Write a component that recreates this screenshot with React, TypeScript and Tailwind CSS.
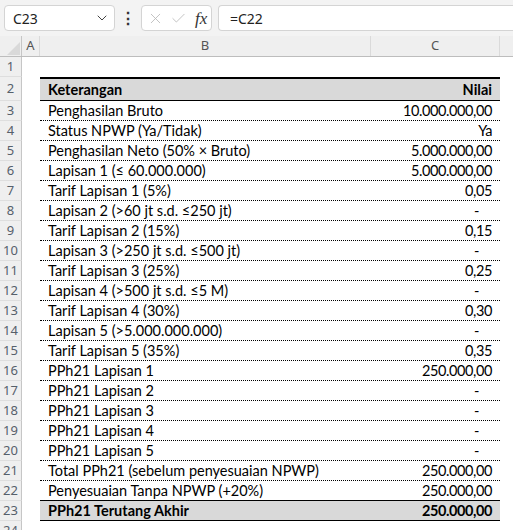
import { ChevronDown, X, Check } from "lucide-react";

type Row = {
  label: string;
  value: string;
};

const rows: Row[] = [
  { label: "Penghasilan Bruto", value: "10.000.000,00" },
  { label: "Status NPWP (Ya/Tidak)", value: "Ya" },
  { label: "Penghasilan Neto (50% × Bruto)", value: "5.000.000,00" },
  { label: "Lapisan 1 (≤ 60.000.000)", value: "5.000.000,00" },
  { label: "Tarif Lapisan 1 (5%)", value: "0,05" },
  { label: "Lapisan 2 (>60 jt s.d. ≤250 jt)", value: "-" },
  { label: "Tarif Lapisan 2 (15%)", value: "0,15" },
  { label: "Lapisan 3 (>250 jt s.d. ≤500 jt)", value: "-" },
  { label: "Tarif Lapisan 3 (25%)", value: "0,25" },
  { label: "Lapisan 4 (>500 jt s.d. ≤5 M)", value: "-" },
  { label: "Tarif Lapisan 4 (30%)", value: "0,30" },
  { label: "Lapisan 5 (>5.000.000.000)", value: "-" },
  { label: "Tarif Lapisan 5 (35%)", value: "0,35" },
  { label: "PPh21 Lapisan 1", value: "250.000,00" },
  { label: "PPh21 Lapisan 2", value: "-" },
  { label: "PPh21 Lapisan 3", value: "-" },
  { label: "PPh21 Lapisan 4", value: "-" },
  { label: "PPh21 Lapisan 5", value: "-" },
  { label: "Total PPh21 (sebelum penyesuaian NPWP)", value: "250.000,00" },
  { label: "Penyesuaian Tanpa NPWP (+20%)", value: "250.000,00" },
];

const cellFont = "font-['Lato',sans-serif] text-[14.5px] text-black";

function RowNum({ n, h }: { n: number; h: string }) {
  return (
    <div
      className={`${h} w-[22px] shrink-0 bg-[#efefef] border-r border-b border-r-[#c6c6c6] border-b-[#dedede] flex items-center justify-center font-['Noto_Sans',sans-serif] text-[13px] text-[#56606b]`}
    >
      {n}
    </div>
  );
}

export default function App() {
  return (
    <div className="w-[513px] h-[530px] overflow-hidden bg-white">
      {/* formula bar */}
      <div className="h-[36px] bg-[#f3f3f3] flex items-start pt-[5px] pl-[4px] gap-[6px] font-['Noto_Sans',sans-serif]">
        <div className="w-[111px] h-[26px] bg-white border border-[#d4d4d4] rounded-[4px] flex items-center justify-between pl-[8px] pr-[4px] text-[14px] text-[#222]">
          <span>C23</span>
          <ChevronDown size={16} strokeWidth={1.5} className="text-[#444]" />
        </div>
        <div className="w-[14px] h-[26px] flex items-center justify-center text-[#333] text-[16px] font-bold">⋮</div>
        <div className="w-[71px] h-[26px] bg-white border border-[#d4d4d4] rounded-[4px] flex items-center pl-[5px] gap-[6px]">
          <X size={17} strokeWidth={1.2} className="text-[#b8b8b8]" />
          <Check size={17} strokeWidth={1.2} className="text-[#b8b8b8]" />
          <span className="font-['Liberation_Serif',serif] italic text-[17px] text-[#333] ml-[2px] leading-none">fx</span>
        </div>
        <div className="flex-1 h-[26px] bg-white border border-r-0 border-[#d4d4d4] rounded-l-[4px] flex items-center pl-[11px] text-[14px] text-[#222]">
          =C22
        </div>
      </div>

      {/* column headers */}
      <div className="flex h-[21px] bg-[#efefef] border-b border-[#bdbdbd] font-['Noto_Sans',sans-serif] text-[13px] text-[#555]">
        <div className="w-[22px] shrink-0 border-r border-[#c6c6c6] flex items-end justify-end pr-[1px] pb-[1px]">
          <div className="w-0 h-0 border-l-[13px] border-l-transparent border-b-[13px] border-b-[#d9d9d9]" />
        </div>
        <div className="w-[18px] shrink-0 border-r border-[#dadada] flex items-center justify-center">A</div>
        <div className="w-[331px] shrink-0 border-r border-[#dadada] flex items-center justify-center">B</div>
        <div className="w-[129px] shrink-0 border-r border-[#dadada] flex items-center justify-center">C</div>
        <div className="flex-1" />
      </div>

      {/* row 1 */}
      <div className="flex h-[20px]">
        <RowNum n={1} h="h-[20px]" />
      </div>

      {/* row 2: table header */}
      <div className="flex h-[24px]">
        <RowNum n={2} h="h-[24px]" />
        <div className="w-[18px] shrink-0" />
        <div className={`w-[460px] shrink-0 bg-[#d9d9d9] border-t-2 border-b border-black flex items-center justify-between px-[8px] font-bold ${cellFont}`}>
          <span>Keterangan</span>
          <span>Nilai</span>
        </div>
      </div>

      {rows.map((r, i) => {
        const last = i === rows.length - 1;
        return (
          <div key={i} className="flex h-[20px]">
            <RowNum n={i + 3} h="h-[20px]" />
            <div className="w-[18px] shrink-0" />
            <div
              className={`w-[460px] shrink-0 border-b border-black ${last ? "border-solid" : "border-dotted"} flex items-center justify-between pl-[8px] ${r.value === "-" ? "pr-[21px]" : "pr-[8px]"} ${cellFont}`}
            >
              <span>{r.label}</span>
              <span className="tracking-[-0.4px]">{r.value}</span>
            </div>
          </div>
        );
      })}

      {/* row 23: total */}
      <div className="flex h-[20px]">
        <RowNum n={23} h="h-[20px]" />
        <div className="w-[18px] shrink-0" />
        <div className={`w-[460px] shrink-0 bg-[#d9d9d9] border-b border-black flex items-center justify-between px-[8px] font-bold ${cellFont}`}>
          <span>PPh21 Terutang Akhir</span>
          <span className="tracking-[-0.4px]">250.000,00</span>
        </div>
      </div>

      <div className="flex h-[20px]">
        <RowNum n={24} h="h-[20px]" />
      </div>
    </div>
  );
}
